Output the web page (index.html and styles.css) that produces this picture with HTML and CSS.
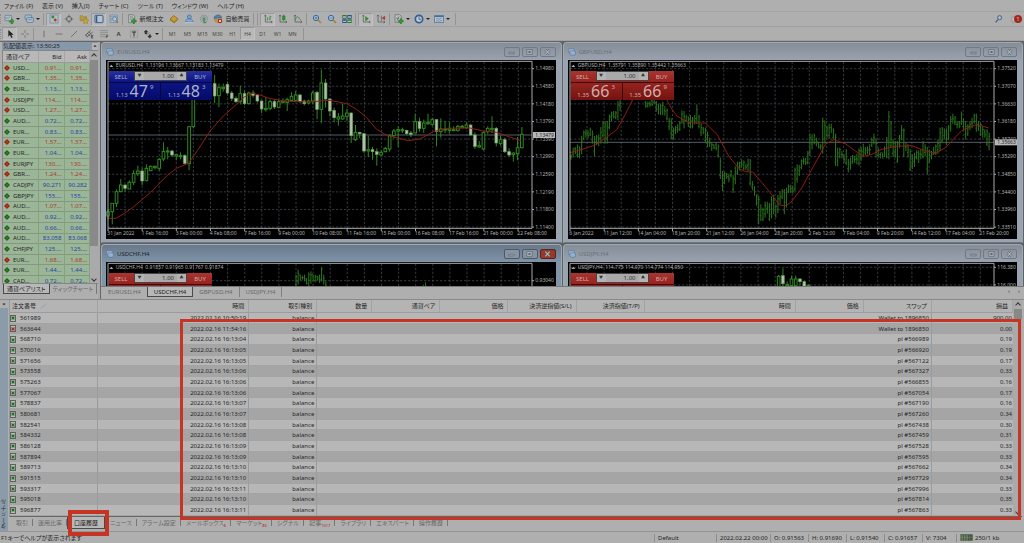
FILE: index.html
```html
<!DOCTYPE html>
<html lang="ja">
<head>
<meta charset="utf-8">
<title>ターミナル</title>
<link rel="stylesheet" href="styles.css">
</head>
<body>
<svg class="defs" aria-hidden="true">
  <symbol id="i-new" viewBox="0 0 30 30"><rect x="3" y="4" width="20" height="16" rx="2" fill="#b9c3c9" stroke="#4f7390" stroke-width="2"/><path d="M7 15v-6M12 16V8M17 13V8" stroke="#5d7f97" stroke-width="2"/><path d="M16 20h5v-5h5v5h4v5h-4v5h-5v-5h-5z" fill="#2f9a2b" stroke="#1e6b1c"/></symbol>
  <symbol id="i-profiles" viewBox="0 0 30 30"><rect x="3" y="3" width="20" height="14" rx="3" fill="#a9b8c6" stroke="#4b7398" stroke-width="2"/><rect x="8" y="11" width="20" height="14" rx="3" fill="#b4c0cb" stroke="#3e6a94" stroke-width="2"/><path d="M12 17h12" stroke="#5380a8" stroke-width="2"/></symbol>
  <symbol id="i-market" viewBox="0 0 30 30"><rect x="3" y="3" width="24" height="24" fill="#b4bcc4" stroke="#6388aa" stroke-width="2"/><path d="M6 9l6-5 5 5-5 5z" fill="#2f8c2d"/><path d="M13 18l6-5 5 5-5 5z" fill="#b33a22"/></symbol>
  <symbol id="i-target" viewBox="0 0 30 30" fill="none" stroke="#4d5358" stroke-width="2"><circle cx="15" cy="15" r="8"/><path d="M15 2v10M15 18v10M2 15h10M18 15h10"/></symbol>
  <symbol id="i-star" viewBox="0 0 30 30"><path d="M3 5h8l3 3h9v12H3z" fill="#b59a45" stroke="#7b6629"/><path d="M20 11l3 6 7 1-5 4 1 7-6-3-6 3 1-7-5-4 7-1z" fill="#c9a92f" stroke="#806514"/></symbol>
  <symbol id="i-terminal" viewBox="0 0 30 30"><rect x="3" y="4" width="24" height="22" rx="2" fill="#bac3cd" stroke="#315f91" stroke-width="3"/><path d="M8 5v20" stroke="#315f91" stroke-width="4"/></symbol>
  <symbol id="i-tester" viewBox="0 0 30 30"><rect x="3" y="3" width="22" height="22" fill="#afb9c3" stroke="#6a88a3" stroke-width="2"/><path d="M3 8h22M7 12v9M11 12v5" stroke="#6a88a3" stroke-width="2"/><circle cx="17" cy="15" r="6" fill="#b4c9dc" stroke="#446f97" stroke-width="2"/><path d="M21 20l6 7" stroke="#a37b2a" stroke-width="4"/></symbol>
  <symbol id="i-order" viewBox="0 0 30 30"><path d="M5 2h13l5 5v19H5z" fill="#bcc0c0" stroke="#62686c" stroke-width="2"/><path d="M9 8h8M9 12h10M9 16h7" stroke="#737b80" stroke-width="2"/><path d="M13 19h5v-5h5v5h5v5h-5v5h-5v-5h-5z" fill="#2f9a2b" stroke="#1e6b1c"/></symbol>
  <symbol id="i-book" viewBox="0 0 30 30"><path d="M3 15L14 5l13 9-11 11z" fill="#c89b28" stroke="#7f5e14" stroke-width="2"/><path d="M3 15v4l13 9 11-11v-3L16 25z" fill="#a0711d"/></symbol>
  <symbol id="i-user" viewBox="0 0 30 30"><circle cx="16" cy="9" r="6" fill="#7ba0c4" stroke="#386c9f" stroke-width="2"/><path d="M5 24c0-7 4-9 10-9s12 2 12 9z" fill="#8faecb" stroke="#386c9f" stroke-width="2"/><path d="M3 26h24" stroke="#b7c8d7" stroke-width="3"/></symbol>
  <symbol id="i-signal" viewBox="0 0 30 30" fill="none"><circle cx="15" cy="14" r="11" stroke="#75909d" stroke-width="2"/><circle cx="15" cy="14" r="6" stroke="#668c84" stroke-width="2"/><circle cx="15" cy="14" r="3" fill="#318c3a"/><path d="M15 15v12l7-2" stroke="#318c3a" stroke-width="3"/></symbol>
  <symbol id="i-auto" viewBox="0 0 30 30"><path d="M3 13c2-13 21-13 23-2z" fill="#5284ad" stroke="#315b7e" stroke-width="2"/><path d="M4 14l11 3 11-4-3 10-9 3-8-4z" fill="#c39d34" stroke="#805f18"/><circle cx="21" cy="21" r="7" fill="#b9291d"/><rect x="18" y="18" width="6" height="6" fill="#d5c8c5"/></symbol>
  <symbol id="i-bars" viewBox="0 0 30 30" fill="none" stroke="#4c5052" stroke-width="2"><path d="M7 4v20h20M4 7l3-4 3 4M24 21l4 3-4 3"/><path d="M14 19V9M11 17h3M21 19V5M18 15h3M21 8h4" stroke="#277d27"/></symbol>
  <symbol id="i-candles" viewBox="0 0 30 30" fill="none" stroke="#4c5052" stroke-width="2"><path d="M6 4v20h20M3 7l3-4 3 4M23 21l4 3-4 3"/><path d="M17 2v19" stroke="#277d27"/><rect x="14" y="6" width="7" height="11" fill="#2d9a2b" stroke="#277d27"/></symbol>
  <symbol id="i-line" viewBox="0 0 30 30" fill="none" stroke="#4c5052" stroke-width="2"><path d="M6 4v20h20M3 7l3-4 3 4M23 21l4 3-4 3"/><path d="M7 18c3-12 9-12 12-4l5 4" stroke="#277d27"/></symbol>
  <symbol id="i-zoomin" viewBox="0 0 30 30"><path d="M18 18l9 9" stroke="#a98129" stroke-width="5"/><circle cx="12" cy="12" r="8" fill="#aabfd2" stroke="#386b9c" stroke-width="3"/><path d="M8 12h8M12 8v8" stroke="#285c91" stroke-width="2"/></symbol>
  <symbol id="i-zoomout" viewBox="0 0 30 30"><path d="M18 18l9 9" stroke="#a98129" stroke-width="5"/><circle cx="12" cy="12" r="8" fill="#aabfd2" stroke="#386b9c" stroke-width="3"/><path d="M8 12h8" stroke="#285c91" stroke-width="2"/></symbol>
  <symbol id="i-tiles" viewBox="0 0 30 30"><path d="M1 3h13v11H1zM16 16h13v11H16z" fill="#2b7a2f"/><path d="M16 3h13v11H16zM1 16h13v11H1z" fill="#274e8c"/><path d="M3 9h9M18 9h9M3 22h9M18 22h9" stroke="#b5bfc3" stroke-width="4"/></symbol>
  <symbol id="i-scroll" viewBox="0 0 30 30" fill="none" stroke="#4c5052" stroke-width="2"><path d="M7 4v20h20M4 7l3-4 3 4M24 21l4 3-4 3"/><path d="M14 8l8 6-8 6z" fill="#2d9a2b" stroke="#277d27"/></symbol>
  <symbol id="i-shift" viewBox="0 0 30 30" fill="none" stroke="#4c5052" stroke-width="2"><path d="M6 4v20h20M3 7l3-4 3 4M23 21l4 3-4 3M16 5v16"/><path d="M26 7l-7 5 7 5z" fill="#a73524" stroke="#a73524"/></symbol>
  <symbol id="i-indicator" viewBox="0 0 30 30"><path d="M3 2h14l5 5v18H3z" fill="#b9bdbd" stroke="#62686c" stroke-width="2"/><path d="M8 20c5 0 3-12 8-12M7 13h7" fill="none" stroke="#4c5560" stroke-width="2"/><path d="M13 19h5v-5h5v5h5v5h-5v5h-5v-5h-5z" fill="#2f9a2b" stroke="#1e6b1c"/></symbol>
  <symbol id="i-clock" viewBox="0 0 30 30"><circle cx="15" cy="15" r="11" fill="#bcc8d2" stroke="#2b5f9e" stroke-width="5"/><path d="M15 8v8h6" fill="none" stroke="#39424a" stroke-width="2"/></symbol>
  <symbol id="i-template" viewBox="0 0 30 30"><rect x="2" y="4" width="26" height="22" fill="#b5c0ca" stroke="#3f6f9f" stroke-width="2"/><path d="M2 7h26" stroke="#3f6f9f" stroke-width="4"/><path d="M6 16l5-3 4 3 8-4M6 22l5-2 5 2 8-3" fill="none" stroke="#577b9b" stroke-width="2"/></symbol>
  <symbol id="i-cursor" viewBox="0 0 30 30"><path d="M10 3v20l5-5 4 9 4-2-4-8h7z" fill="#222"/></symbol>
  <symbol id="i-cross" viewBox="0 0 30 30"><path d="M15 3v9M15 18v9M3 15h9M18 15h9" stroke="#666" stroke-width="2"/></symbol>
  <symbol id="i-v" viewBox="0 0 30 30"><path d="M15 5v20" stroke="#555" stroke-width="2"/></symbol>
  <symbol id="i-h" viewBox="0 0 30 30"><path d="M5 15h20" stroke="#555" stroke-width="2"/></symbol>
  <symbol id="i-trend" viewBox="0 0 30 30"><path d="M6 24L24 6" stroke="#555" stroke-width="2"/></symbol>
  <symbol id="i-channel" viewBox="0 0 30 30"><path d="M3 20L20 4M8 25L26 9M9 12l8 9M14 8l8 8M5 17l6 7" stroke="#444" stroke-width="2"/><path d="M28 19h-6v8h6M22 23h5" fill="none" stroke="#333" stroke-width="2"/></symbol>
  <symbol id="i-fib" viewBox="0 0 30 30"><path d="M3 5h24M3 11h24M3 17h24M3 23h16" stroke="#666" stroke-width="2" stroke-dasharray="2 1"/><path d="M22 27v-7h6M22 23h5" fill="none" stroke="#444" stroke-width="2"/></symbol>
  <symbol id="i-text" viewBox="0 0 30 30"><rect x="4" y="4" width="22" height="22" fill="none" stroke="#777" stroke-width="2" stroke-dasharray="2 2"/><path d="M9 9h12M15 9v13" stroke="#333" stroke-width="3"/></symbol>
  <symbol id="i-arrows" viewBox="0 0 30 30"><path d="M3 9l6-6 6 6-4 1 1 5H6V10zM26 22l-6 6-6-6 4-1v-4h5v4zM11 17l9-7" fill="#333" stroke="#333"/></symbol>
  <symbol id="i-search" viewBox="0 0 30 30"><path d="M12 17l-7 8" stroke="#3f5f86" stroke-width="4"/><circle cx="17" cy="11" r="6" fill="#b5bec8" stroke="#3f5f86" stroke-width="3"/></symbol>
  <symbol id="i-chat" viewBox="0 0 30 30"><path d="M2 9h20v13H12l-6 6v-6H2z" fill="#c0c0c0" stroke="#8d8d8d" stroke-width="2"/></symbol>
  <symbol id="i-win" viewBox="0 0 24 24"><rect x="2" y="2" width="17" height="12" rx="2" fill="#9fb3cb" stroke="#5179a8" stroke-width="2"/><rect x="6" y="9" width="16" height="12" rx="2" fill="#aebfd1" stroke="#456fa2" stroke-width="2"/><path d="M10 17v-4M14 18v-4M18 17v-4" stroke="#456fa2"/></symbol>
  <symbol id="i-min" viewBox="0 0 24 15"><path d="M7 8h10v3H7z" fill="#aab1b8" stroke="#4e565e"/></symbol>
  <symbol id="i-max" viewBox="0 0 24 15"><path d="M7 3h10v9H7z" fill="#aab1b8" stroke="#4e565e"/><path d="M10 6h4v3h-4z" fill="#4e565e"/></symbol>
  <symbol id="i-close" viewBox="0 0 24 15"><path d="M8 3l8 9M16 3l-8 9" stroke="#4e565e" stroke-width="4"/><path d="M8 3l8 9M16 3l-8 9" stroke="#b5bac0" stroke-width="2"/></symbol>
</svg>

<div class="app">
  <nav class="menu" aria-label="メニュー">
    <button>ファイル (F)</button><button>表示 (V)</button><button>挿入(I)</button><button>チャート (C)</button><button>ツール (T)</button><button>ウィンドウ (W)</button><button>ヘルプ (H)</button>
  </nav>
  <div class="toolbar" role="toolbar" aria-label="標準">
    <span class="grip"></span>
    <button class="tb drop" aria-label="新規チャート"><svg><use href="#i-new"/></svg></button>
    <button class="tb drop" aria-label="組表示"><svg><use href="#i-profiles"/></svg></button>
    <span class="sep"></span>
    <button class="tb on" aria-label="気配値表示"><svg><use href="#i-market"/></svg></button>
    <button class="tb" aria-label="データウィンドウ"><svg><use href="#i-target"/></svg></button>
    <button class="tb" aria-label="ナビゲーター"><svg><use href="#i-star"/></svg></button>
    <button class="tb on" aria-label="ターミナル"><svg><use href="#i-terminal"/></svg></button>
    <button class="tb" aria-label="テスター"><svg><use href="#i-tester"/></svg></button>
    <span class="sep"></span>
    <button class="tb wide"><svg><use href="#i-order"/></svg>新規注文</button>
    <button class="tb" aria-label="エディター"><svg><use href="#i-book"/></svg></button>
    <button class="tb" aria-label="コミュニティ"><svg><use href="#i-user"/></svg></button>
    <button class="tb" aria-label="シグナル"><svg><use href="#i-signal"/></svg></button>
    <button class="tb wide"><svg><use href="#i-auto"/></svg>自動売買</button>
    <span class="sep"></span><span class="sep"></span>
    <button class="tb on" aria-label="バーチャート"><svg><use href="#i-bars"/></svg></button>
    <button class="tb" aria-label="ローソク足"><svg><use href="#i-candles"/></svg></button>
    <button class="tb" aria-label="ライン"><svg><use href="#i-line"/></svg></button>
    <span class="sep"></span>
    <button class="tb" aria-label="拡大"><svg><use href="#i-zoomin"/></svg></button>
    <button class="tb" aria-label="縮小"><svg><use href="#i-zoomout"/></svg></button>
    <button class="tb" aria-label="整列"><svg><use href="#i-tiles"/></svg></button>
    <span class="sep"></span>
    <button class="tb on" aria-label="自動スクロール"><svg><use href="#i-scroll"/></svg></button>
    <button class="tb" aria-label="シフト"><svg><use href="#i-shift"/></svg></button>
    <span class="sep"></span>
    <button class="tb drop" aria-label="インディケータ"><svg><use href="#i-indicator"/></svg></button>
    <button class="tb drop" aria-label="時間足"><svg><use href="#i-clock"/></svg></button>
    <button class="tb drop" aria-label="定型チャート"><svg><use href="#i-template"/></svg></button>
    <span class="sep end"></span>
    <span class="spacer"></span>
    <button class="tb" aria-label="検索"><svg><use href="#i-search"/></svg></button>
    <button class="tb notify" aria-label="通知"><svg><use href="#i-chat"/></svg><span class="badge">1</span></button>
  </div>
  <div class="toolbar second" role="toolbar" aria-label="描画">
    <span class="grip"></span>
    <button class="tb on" aria-label="カーソル"><svg><use href="#i-cursor"/></svg></button>
    <button class="tb" aria-label="十字"><svg><use href="#i-cross"/></svg></button>
    <span class="sep"></span>
    <button class="tb" aria-label="垂直線"><svg><use href="#i-v"/></svg></button>
    <button class="tb" aria-label="水平線"><svg><use href="#i-h"/></svg></button>
    <button class="tb" aria-label="トレンドライン"><svg><use href="#i-trend"/></svg></button>
    <button class="tb" aria-label="チャネル"><svg><use href="#i-channel"/></svg></button>
    <button class="tb" aria-label="フィボナッチ"><svg><use href="#i-fib"/></svg></button>
    <button class="tb letter">A</button>
    <button class="tb" aria-label="ラベル"><svg><use href="#i-text"/></svg></button>
    <button class="tb drop" aria-label="矢印"><svg><use href="#i-arrows"/></svg></button>
    <span class="sep"></span>
    <button class="tb tf">M1</button><button class="tb tf">M5</button><button class="tb tf">M15</button><button class="tb tf">M30</button><button class="tb tf">H1</button><button class="tb tf on">H4</button><button class="tb tf">D1</button><button class="tb tf">W1</button><button class="tb tf">MN</button>
    <span class="sep end"></span>
  </div>

  <div class="workspace">
    <aside class="market">
      <header class="market-title"><span>気配値表示: 13:50:25</span><button aria-label="閉じる">×</button></header>
      <div class="market-body">
        <div class="market-scroll">
          <table class="quotes">
            <thead><tr><th class="sym">通貨ペア</th><th>Bid</th><th>Ask</th></tr></thead>
            <tbody id="quotes"></tbody>
          </table>
        </div>
        <div class="vscroll"><span class="arrow up"></span><span class="thumb"></span><span class="arrow down"></span></div>
      </div>
      <div class="market-tabs"><button class="tab active">通貨ペアリスト</button><button class="tab">ティックチャート</button></div>
    </aside>
    <main class="desk">
      <div class="windows" id="windows"></div>
      <div class="chart-tabs"><button class="tab">EURUSD,H4</button><button class="tab active">USDCHF,H4</button><button class="tab">GBPUSD,H4</button><button class="tab">USDJPY,H4</button><span class="spacer"></span><button class="nudge">‹</button><button class="nudge">›</button></div>
    </main>
  </div>

  <section class="terminal">
    <div class="side"><button aria-label="閉じる">×</button><span>ターミナル</span></div>
    <div class="terminal-main">
      <div class="history-wrap">
        <table class="history">
          <colgroup><col class="c-id"><col class="c-time"><col class="c-std"><col class="c-vol"><col class="c-std"><col class="c-std"><col class="c-std"><col class="c-std"><col class="c-time"><col class="c-std"><col class="c-std"><col class="c-pl"></colgroup>
          <thead><tr><th class="id">注文番号 <i>∕</i></th><th>時間</th><th>取引種別</th><th>数量</th><th>通貨ペア</th><th>価格</th><th>決済逆指値(S/L)</th><th>決済指値(T/P)</th><th>時間</th><th>価格</th><th>スワップ</th><th>損益</th></tr></thead>
          <tbody id="history"></tbody>
        </table>
        <div class="vscroll history-scroll"><span class="arrow up"></span><span class="thumb"></span><span class="arrow down"></span></div>
      </div>
      <div class="terminal-tabs"><button class="tab">取引</button><button class="tab">運用比率</button><button class="tab active">口座履歴</button><button class="tab">ニュース</button><button class="tab">アラーム設定</button><button class="tab">メールボックス<sub>6</sub></button><button class="tab">マーケット<sub>83</sub></button><button class="tab">シグナル</button><button class="tab">記事<sub>1017</sub></button><button class="tab">ライブラリ</button><button class="tab">エキスパート</button><button class="tab">操作履歴</button></div>
    </div>
    <div class="mark mark-rows"></div>
    <div class="mark mark-tab"></div>
  </section>

  <footer class="status">
    <span class="help">F1キーでヘルプが表示されます</span>
    <span class="s-profile">Default</span><span class="s-date">2022.02.22 00:00</span><span class="s-val">O: 0.91563</span><span class="s-val">H: 0.91690</span><span class="s-val">L: 0.91540</span><span class="s-val">C: 0.91657</span><span class="s-vol">V: 7304</span>
    <span class="s-net"><svg viewBox="0 0 39 21"><path d="M1 1h37v19H1z" fill="#3a4a35"/><path d="M3 3v16M8 3v16M13 3v16M18 3v16M23 3v16" stroke="#8fa682" stroke-width="2"/><path d="M1 10h37M28 3v16M33 3v16" stroke="#9aa3a8"/></svg>250/1 kb</span>
  </footer>
</div>
<script src="app.js"></script>
</body>
</html>
```

FILE: styles.css
```css
* { box-sizing: border-box; }
body {
  margin: 0;
  background: #afafaf;
  color: #262626;
  font: 6px/8px "Noto Sans", "Noto Sans CJK JP", sans-serif;
  font-feature-settings: "palt";
}
button, input { font: inherit; color: inherit; margin: 0; padding: 0; border: 0; background: none; font-feature-settings: inherit; }
button { white-space: nowrap; }
.defs { display: none; }
.app { display: flex; flex-direction: column; height: 100vh; overflow: hidden; }
.spacer { flex: 1; }

.menu { display: flex; flex: none; gap: 9px; height: 12px; padding: 0 4px; align-items: center; border-bottom: 1px solid #a2a2a2; }

.toolbar { display: flex; flex: none; height: 15px; align-items: center; border-bottom: 1px solid #a0a0a0; }
.toolbar.second { height: 14px; }
.grip { width: 2px; height: 10px; border-left: 1px dotted #8d8d8d; }
.tb { position: relative; flex: none; display: flex; align-items: center; justify-content: center; width: 15px; height: 13px; }
.tb svg { width: 10px; height: 10px; flex: none; }
.tb.on { background: #b9b9b9; border: 1px solid #989898; border-right-color: #c2c2c2; border-bottom-color: #c2c2c2; }
.tb.drop { width: 20px; gap: 2px; }
.tb.drop::after { content: ""; border: 2px solid transparent; border-top-color: #222; border-bottom: 0; }
.tb.wide { width: 41px; gap: 2px; }
.tb.letter { font-weight: bold; color: #444; }
.tb.tf { font-size: 5px; color: #444; }
.sep { flex: none; width: 4px; height: 12px; border-left: 1px solid #939393; margin-left: 1px; margin-right: -1px; }
.sep.end { margin-left: 3px; }
.notify { margin-left: 2px; margin-right: 1px; }
.badge { position: absolute; right: 1px; top: 2px; width: 8px; height: 8px; border-radius: 4px; background: #a3271d; color: #ccc; font-size: 6px; line-height: 8px; }

.workspace { display: flex; flex: 1; min-height: 0; background: #a9a9a9; border-top: 1px solid #666; }
.market { display: flex; flex-direction: column; width: 98px; padding-left: 2px; flex: none; min-height: 0; background: #afafaf; }
.market-title { display: flex; flex: none; justify-content: space-between; align-items: center; height: 8px; padding: 0 0 0 1px; background: #8798aa; }
.market-title button { width: 6px; height: 7px; line-height: 6px; background: #b4b4b4; font-weight: bold; }
.market-body { display: flex; flex: 1; min-height: 0; border: 1px solid #858585; border-right: 0; }
.market-scroll { flex: 1; min-width: 0; overflow: hidden; }
table { border-collapse: separate; border-spacing: 0; table-layout: fixed; width: 100%; }
th { font-weight: normal; }
th, td { padding: 0; white-space: nowrap; overflow: hidden; line-height: 8px; }
.quotes { height: 236px; }
.quotes thead tr { height: 12px; }
.quotes th { background: #b8b8b8; text-align: right; padding-right: 2px; border-right: 1px solid #a6a6a6; border-bottom: 1px solid #9a9a9a; }
.quotes th.sym { width: 36px; text-align: left; padding-left: 3px; }
.quotes td { background: #9bb597; text-align: right; padding-right: 2px; border-right: 1px solid #87a083; border-bottom: 1px solid #83987f; }
.quotes td:first-child { text-align: left; padding: 0 0 0 2px; }
.quotes .down { color: #a73d2b; }
.quotes .up { color: #2746a5; }
.dot { display: inline-block; width: 4px; height: 4px; margin-right: 4px; background: #2b8129; border: 1px solid #245f22; rotate: 45deg; }
.dot.fall { background: #c0341e; border-color: #8d2819; }
.vscroll { display: flex; flex-direction: column; align-items: center; flex: none; width: 8px; background: #aaa; }
.vscroll .arrow { flex: none; width: 4px; height: 4px; margin: 3px 0 2px; border: solid #333; border-width: 1px 0 0 1px; rotate: 45deg; }
.vscroll .arrow.down { border-width: 0 1px 1px 0; margin-top: auto; }
.vscroll .thumb { width: 8px; height: 186px; background: #898989; }
.tab { color: #686868; }
.tab.active { color: #1b1b1b; background: #b8b8b8; border: 1px solid #4a4a4a; border-top: 0; }
.market-tabs { display: flex; flex: none; height: 15px; align-items: flex-start; padding-left: 1px; }
.market-tabs .tab { height: 10px; padding: 0 3px; }
.market-tabs .tab:last-child { border-right: 1px solid #777; }

.desk { display: flex; flex-direction: column; flex: 1; min-width: 0; margin-left: 2px; border-left: 1px solid #666; }
.windows { display: grid; grid-template-columns: 1fr 1fr; grid-auto-rows: 201px; gap: 1px; flex: 1; min-height: 0; padding: 0 1px 0 0; overflow: hidden; background: #5f6265; }
.win { display: flex; flex-direction: column; min-width: 0; padding: 0 5px 3px 4px; border-radius: 4px 4px 0 0; background: linear-gradient(#858d97, #9aa4b0 18px); border: 1px solid #a0a8b1; border-bottom-color: #70767d; color: #687079; }
.win.current { background: linear-gradient(#68798b, #8195a9 18px); color: #1e252c; }
.win-title { display: flex; flex: none; align-items: center; height: 17px; gap: 3px; }
.win-title svg.mark-icon { width: 8px; height: 8px; }
.win-title h2 { flex: 1; margin: 0; font: inherit; }
.ctl { display: flex; align-items: center; justify-content: center; width: 16px; height: 10px; margin-left: -1px; border: 1px solid #717a84; border-radius: 2px; }
.ctl svg { width: 13px; height: 8px; }
.current .ctl { background: #8793a0; border-color: #4d5965; }
.current .ctl.x { background: #9a3828; border-color: #5a241d; }
.chart { position: relative; flex: 1; min-height: 0; overflow: hidden; background: #000; }
.chart > svg { display: block; width: 100%; height: 100%; }
.chart text { fill: #b0b0b0; font-size: 15px; }
.grid { stroke: #4a535c; stroke-width: 2; stroke-dasharray: 7 5; }
.frame { fill: none; stroke: #a9a9a9; stroke-width: 3; }
.bid { stroke: #535c64; stroke-width: 3; }
.ma { fill: none; stroke: #8e1d14; stroke-width: 3; }
.wick { stroke: #2f8a1e; stroke-width: 3; fill: none; }
.bull { fill: #000; stroke: #2f8a1e; stroke-width: 3; }
.bear { fill: #b3bfad; stroke: #6fa061; stroke-width: 2; }
.bar { stroke: #2b751c; stroke-width: 3; fill: none; }
.chart .tag { fill: #b8b8b8; }
.chart .tag-text { fill: #222; }

.trade { position: absolute; left: 3px; top: 11px; display: grid; grid-template-columns: 51px 51px; gap: 1px; --c1: #2831a0; --c2: #0c1482; --c3: #050b69; background: #05083e; color: #aeb4ca; }
.trade.red { --c1: #a93430; --c2: #96231f; --c3: #731310; background: #3d0806; color: #ceb0ac; }
.trade-top { grid-column: 1 / 3; display: grid; grid-template-columns: 24px 1fr 24px; gap: 1px; height: 11px; background: linear-gradient(var(--c1), var(--c2)); }
.lots { display: flex; margin-bottom: 1px; background: #b3b3b3; color: #333; border: 1px solid #444; }
.lots button { width: 9px; font-size: 4px; line-height: 6px; }
.lots input { flex: 1; width: 0; min-width: 0; height: 8px; padding-right: 3px; text-align: right; background: #a9a9a9; }
.quote { display: flex; height: 17px; align-items: flex-end; justify-content: center; gap: 2px; padding-bottom: 2px; background: linear-gradient(var(--c2), var(--c3)); }
.quote .pre { line-height: 6px; }
.quote .big { font-size: 16px; line-height: 13px; }
.quote .pip { align-self: flex-start; }

.chart-tabs { display: flex; flex: none; height: 13px; align-items: flex-start; padding-left: 1px; background: #afafaf; border-top: 1px solid #787878; }
.chart-tabs .tab { height: 10px; padding: 0 6px; }
.chart-tabs .tab:nth-child(n+3) { border-right: 1px solid #808080; }
.nudge { width: 10px; }

.terminal { position: relative; display: flex; flex: none; padding-right: 2px; border-top: 1px solid #8a8a8a; }
.side { display: flex; flex-direction: column; justify-content: space-between; align-items: center; width: 8px; margin-right: 1px; background: #8c9baa; }
.side span { writing-mode: vertical-rl; rotate: 180deg; color: #2b3239; padding-top: 2px; }
.side button { width: 8px; height: 8px; font-weight: bold; background: #afafaf; }
.terminal-main { flex: 1; min-width: 0; }
.history-wrap { display: flex; border-bottom: 1px solid #666; border-left: 1px solid #999; }
.history { flex: 1; width: 0; height: 216px; }
.c-id { width: 88px; } .c-time { width: 151px; } .c-std { width: 68px; } .c-vol { width: 55px; } .c-pl { width: 81px; }
.history thead tr { height: 13px; }
.history th { background: #b4b4b4; text-align: right; padding-right: 4px; border-right: 1px solid #a2a2a2; border-bottom: 1px solid #9c9c9c; }
.history th.id { text-align: left; padding-left: 2px; }
.history th i { margin-left: 3px; color: #666; }
.history td { text-align: right; padding-right: 2px; background: #b7b7b7; border-bottom: 1px solid #a4a4a4; }
.history td:nth-child(-n+4) { border-right: 1px solid #9b9b9b; }
.history tr:nth-child(even) td { background: #a5a5a5; }
.history td:first-child { text-align: left; padding-left: 0; }
.history td:last-child { padding-right: 1px; }
.doc { display: inline-flex; align-items: center; justify-content: center; width: 6px; height: 7px; margin-right: 4px; vertical-align: middle; border: 1px solid #5c635c; background: #b5bbb5; }
.doc::after { content: ""; width: 2px; height: 2px; background: #246b22; outline: 1px solid #7fa37c; }
.doc.out::after { background: #b02d1c; outline-color: #b07f77; }
.history-scroll { width: 9px; }
.history-scroll .thumb { height: 10px; background: #888; }
.terminal-tabs { display: flex; height: 14px; align-items: flex-start; padding-left: 2px; }
.terminal-tabs .tab { position: relative; padding: 1px 5px 0; height: 11px; }
.terminal-tabs .tab:not(.active)::after { content: ""; position: absolute; right: 0; top: 2px; height: 7px; border-right: 1px solid #777; }
.terminal-tabs .tab.active { height: 12px; padding: 1px 6px 0; }
sub { color: #a8271d; font-size: 4px; line-height: 0; }
.mark { position: absolute; border: 3px solid #c63524; pointer-events: none; }
.mark-rows { left: 180px; right: 3px; top: 19px; bottom: 11px; }
.mark-tab { left: 68px; bottom: -5px; width: 41px; height: 26px; border-width: 4px; }

.status { display: flex; flex: none; height: 12px; align-items: center; border-top: 1px solid #949494; padding-right: 1px; }
.status span { padding-left: 3px; border-left: 1px solid #8e8e8e; }
.status .help { flex: 1; border: 0; padding-left: 1px; }
.s-profile { width: 62px; }
.s-date { width: 54px; }
.s-val { width: 38px; }
.s-vol { width: 34px; }
.s-net { display: flex; align-items: center; gap: 2px; width: 67px; }
.s-net svg { width: 13px; height: 7px; }
```

FILE: app.js
```js
const quotes = [
  ['USD...', '0.91...', '0.91...', 0], ['GBR...', '1.35...', '1.35...', 0], ['EUR...', '1.13...', '1.13...', 1],
  ['USDJPY', '114....', '114....', 0], ['USD...', '1.27...', '1.27...', 0], ['AUD...', '0.72...', '0.72...', 1],
  ['EUR...', '0.83...', '0.83...', 1], ['EUR...', '1.57...', '1.57...', 0], ['EUR...', '1.04...', '1.04...', 1],
  ['EURJPY', '130....', '130....', 0], ['GBR...', '1.24...', '1.24...', 0], ['CADJPY', '90.271', '90.282', 1],
  ['GBPJPY', '155....', '155....', 1], ['AUD...', '1.07...', '1.07...', 0], ['AUD...', '0.92...', '0.92...', 1],
  ['AUD...', '0.66...', '0.66...', 1], ['AUD...', '83.058', '83.068', 1], ['CHFJPY', '125....', '125....', 1],
  ['EUR...', '1.68...', '1.68...', 0], ['EUR...', '1.44...', '1.44...', 1], ['CAD...', '0.72...', '0.72...', 1]
];
document.getElementById('quotes').innerHTML = quotes.map(([s, b, a, up]) => {
  const c = up ? 'up' : 'down';
  return `<tr><td><span class="dot ${up ? '' : 'fall'}"></span>${s}</td><td class="${c}">${b}</td><td class="${c}">${a}</td></tr>`;
}).join('');

const history = [
  ['561989', '10:50:19', 'Wallet to 1896850', '900.00'], ['563644', '11:54:16', 'Wallet to 1896850', '0.00'],
  ['568710', '16:13:04', 'pl #566989', '0.19'], ['570016', '16:13:05', 'pl #566920', '0.19'],
  ['571656', '16:13:05', 'pl #567122', '0.17'], ['573558', '16:13:06', 'pl #567327', '0.33'],
  ['575263', '16:13:06', 'pl #566855', '0.16'], ['577067', '16:13:06', 'pl #567054', '0.17'],
  ['578837', '16:13:07', 'pl #567190', '0.16'], ['580681', '16:13:07', 'pl #567260', '0.34'],
  ['582541', '16:13:08', 'pl #567438', '0.30'], ['584332', '16:13:08', 'pl #567459', '0.31'],
  ['586128', '16:13:09', 'pl #567528', '0.33'], ['587894', '16:13:09', 'pl #567595', '0.33'],
  ['589713', '16:13:10', 'pl #567662', '0.34'], ['591515', '16:13:10', 'pl #567729', '0.34'],
  ['593317', '16:13:11', 'pl #567996', '0.33'], ['595018', '16:13:10', 'pl #567814', '0.35'],
  ['596877', '16:13:11', 'pl #567863', '0.33']
];
document.getElementById('history').innerHTML = history.map(([id, t, note, pl], i) =>
  `<tr><td><span class="doc ${i === 1 ? 'out' : ''}"></span>${id}</td><td>2022.02.16 ${t}</td><td>balance</td><td colspan="8">${note}</td><td>${pl}</td></tr>`
).join('');

// Candles: high, body top, body bottom, low, filled (1) or hollow (0); null leaves a slot empty.
const eurusd = [
  [505,512,525,535,0],[487,487,512,550,0],[445,452,487,498,0],[414,432,452,452,0],[430,432,442,452,1],[418,424,444,444,0],
  [388,398,424,432,0],[374,390,398,405,0],[380,390,420,433,1],[370,382,419,421,0],[374,376,389,389,0],[374,376,380,385,0],
  [352,355,382,389,0],[304,331,354,360,0],[318,330,332,355,0],[326,330,342,348,1],[338,341,345,358,0],[334,344,347,355,0],
  [340,344,367,370,1],[255,257,368,388,0],[160,170,257,262,0],null,null,null,null,
  [102,128,165,186,1],[128,140,164,198,0],[128,139,143,152,0],[122,130,156,160,1],[150,156,172,180,1],[166,172,182,186,1],
  [134,158,182,190,0],[148,158,188,192,1],[152,156,188,190,0],[148,156,163,170,1],[160,162,180,185,1],[178,180,204,216,1],
  [168,202,206,212,0],[176,182,202,208,0],[176,182,198,204,1],[176,182,199,202,0],[172,180,184,188,0],[170,176,184,210,0],
  [154,166,178,182,0],[150,162,178,180,0],[158,162,182,186,1],[176,180,188,194,1],[176,180,186,190,0],[150,156,180,190,0],
  [150,154,205,235,1],[86,126,205,247,0],[114,126,174,200,1],[172,174,210,226,1],[200,208,230,244,1],[216,228,234,254,0],
  [188,225,234,236,0],[204,216,226,240,0],[214,216,284,306,1],[252,274,296,300,0],[272,274,278,292,1],[276,278,330,336,1],
  [284,326,330,348,0],[318,326,332,356,1],[322,332,340,374,1],[328,334,342,344,0],[318,322,332,334,0],[280,284,324,332,0],
  [264,270,284,292,0],[256,266,270,318,0],[260,266,268,276,0],[266,268,278,282,1],[270,276,280,288,1],[218,242,276,276,0],
  [230,242,262,272,1],[236,246,262,276,0],[218,244,248,252,0],[230,236,250,256,0],[234,236,272,316,1],[232,264,272,290,0],
  [240,264,266,276,0],[244,264,268,278,0],[256,266,268,270,0],[252,256,268,272,0],[252,256,259,262,0],[244,252,260,264,0],
  [250,252,282,284,1],[274,282,316,324,1],[300,314,318,320,0],[272,274,324,328,0],[256,262,272,278,0],[226,262,266,276,0],
  [258,262,306,316,1],[284,296,308,314,0],[290,296,332,336,1],[322,332,342,348,1],[334,336,341,362,0],[288,320,338,358,0],[258,280,320,322,0]
];
// Bars: high and low per slot.
const gbpusd = '340 356,320 350,318 340,310 350,316 352,285 340,268 298,265 290,268 292,260 285,268 308,285 346,282 312,280 316,258 308,240 290,240 308,240 308,220 265,212 240,210 232,210 235,180 238,170 210,,,,,,,,,,,,180 200,182 200,180 198,175 195,170 190,180 212,188 220,188 222,182 222,195 224,202 238,230 268,232 294,260 296,255 280,250 275,240 270,208 248,210 262,222 244,226 258,222 262,228 262,222 250,190 248,222 262,248 285,258 280,260 305,272 318,290 318,305 330,310 324,305 328,310 350,350 414,390 450,392 430,396 414,398 424,386 410,402 456,376 430,362 402,362 388,355 380,358 388,368 388,353 390,354 434,420 448,435 464,460 494,465 550,490 540,500 540,482 530,482 518,486 540,466 532,462 520,490 530,462 516,450 490,444 474,444 520,440 500,430 456,432 456,434 458,380 450,370 425,372 405,355 385,350 370,350 372,330 370,278 345,280 325,278 310,290 316,302 322,310 326,230 338,238 308,255 290,248 294,248 276,262 296,278 375,320 376,320 352,330 352,340 366,324 372,354 394,350 386,342 368,344 366,338 370,322 374,318 360,308 348,318 342,316 340,310 342,290 318,278 310,292 350,320 350,334 352,336 350,316 348,288 352,210 355,240 320,295 348,300 350,300 366,282 320,252 298,262 348,305 330,310 350,325 390,340 384,335 378,328 355,328 366,325 355,300 352,310 346,318 400,326 366,330 355,318 342,310 342,296 338,260 330,258 305,262 295,262 312,252 298,225 272,218 248,225 252,240 262,240 262,212 252,232 268,240 296,250 285,240 268,230 262,218 248,218 272,240 270,245 285,255 290,265 290,265 315,275 328';

function candles(list, x0, step) {
  return list.map((c, i) => {
    if (!c) return '';
    const x = x0 + i * step;
    return `<path class="wick" d="M${x} ${c[0]}V${c[3]}"/><rect class="${c[4] ? 'bear' : 'bull'}" x="${x - 4}" y="${c[1]}" width="8" height="${Math.max(3, c[2] - c[1])}"/>`;
  }).join('');
}
function bars(text, x0, step) {
  return text.split(',').map((p, i) => {
    if (!p) return '';
    const [h, l] = p.split(' ').map(Number), x = x0 + i * step, d = i % 3 * 5;
    return `<path class="bar" d="M${x} ${h}V${l}M${x - 3} ${l - 6 - d}h3M${x} ${h + 6 + d}h3"/>`;
  }).join('');
}
function scene(w) {
  const full = !w.short;
  const bottom = full ? 562 : 700;
  let s = '';
  for (let x = 75; x < 1296; x += 51.3) s += `<path class="grid" d="M${x} 62V${bottom}"/>`;
  w.prices.forEach((p, i) => {
    const y = w.firstLine + i * 52.8;
    s += `<path class="grid" d="M24 ${y}H1296"/><path class="frame" d="M1296 ${y}h6"/><text x="1306" y="${y + 5}">${p}</text>`;
  });
  if (w.bid) s += `<path class="bid" d="M24 ${w.bid}H1296"/>`;
  s += w.drawing;
  if (w.ma) s += `<polyline class="ma" points="${w.ma}"/>`;
  s += `<path class="frame" d="M24 ${bottom}V61H1296V${bottom}${full ? 'z' : ''}"/>`;
  if (w.bid) s += `<rect class="tag" x="1299" y="${w.bid - 9}" width="66" height="18"/><text class="tag-text" x="1306" y="${w.bid + 5}">${w.last}</text>`;
  (w.dates || []).forEach((d, i) => { s += `<path class="frame" d="M${24 + i * 102.5} 562v8"/><text x="${22 + i * 102.5}" y="583">${d}</text>`; });
  s += `<path d="M28 78l6-7 6 7z" fill="#aaa"/><text x="47" y="78">${w.info}</text>`;
  return `<svg viewBox="18 57 1353 537" preserveAspectRatio="xMinYMin slice">${s}</svg>`;
}
const windows = [
  { name: 'EURUSD,H4', info: 'EURUSD,H4&#160; 1.13196 1.13667 1.13183 1.13479', last: '1.13479', bid: 282, firstLine: 83,
    prices: ['1.14980','1.14580','1.14180','1.13790','1.13390','1.12990','1.12590','1.12190','1.11800','1.11400'],
    dates: ['31 Jan 2022','1 Feb 16:00','3 Feb 00:00','4 Feb 08:00','7 Feb 16:00','9 Feb 00:00','10 Feb 08:00','11 Feb 16:00','15 Feb 00:00','16 Feb 08:00','17 Feb 16:00','21 Feb 00:00','22 Feb 08:00'],
    drawing: candles(eurusd, 24, 12.8),
    ma: '24,532 48,532 75,516 100,498 152,454 203,402 229,382 265,367 293,328 330,270 370,225 410,190 433,168 455,157 480,162 510,173 562,181 630,183 660,180 690,178 740,188 770,205 800,230 830,265 860,283 890,290 925,299 960,294 1000,272 1040,262 1110,261 1150,270 1190,274 1220,285 1262,299',
    color: '', sell: ['1.13', '47', '9'], buy: ['1.13', '48', '3'] },
  { name: 'GBPUSD,H4', info: 'GBPUSD,H4&#160; 1.35791 1.35890 1.35442 1.35663', last: '1.35663', bid: 304, firstLine: 83,
    prices: ['1.37520','1.37070','1.36630','1.36180','1.35740','1.35290','1.34850','1.34400','1.33960','1.33510'],
    dates: ['6 Jan 2022','11 Jan 12:00','14 Jan 04:00','18 Jan 20:00','21 Jan 12:00','26 Jan 04:00','28 Jan 20:00','2 Feb 12:00','7 Feb 04:00','9 Feb 20:00','14 Feb 12:00','17 Feb 04:00','21 Feb 20:00'],
    drawing: bars(gbpusd, 27, 6.4),
    ma: '24,335 60,325 100,312 130,292 165,265 190,220 210,180 240,100 290,100 316,180 330,205 345,225 370,240 400,246 430,246 465,280 500,345 530,382 550,392 572,393 600,425 630,462 652,492 672,494 690,480 720,440 741,400 770,348 790,310 815,296 850,308 880,330 905,346 930,340 960,325 1000,316 1050,314 1080,326 1120,338 1150,320 1200,268 1245,250 1280,261',
    color: 'red', sell: ['1.35', '66', '3'], buy: ['1.35', '66', '9'] },
  { name: 'USDCHF,H4', current: true, short: true, info: 'USDCHF,H4&#160; 0.91857 0.91965 0.91767 0.91874', firstLine: 113, prices: ['0.93040'],
    drawing: bars('95 130,80 125,95 112,98 110,95 115,105 125,88 135,85 122,95 110,95 118,98 112,95 120,72 115,95 125,112 140', 588, 6.4) + bars('125 150,118 150', 970, 6.4),
    color: 'red', sell: ['0.91', '87', '4'], buy: ['0.91', '88', '1'] },
  { name: 'USDJPY,H4', short: true, info: 'USDJPY,H4&#160; 114.775 114.970 114.774 114.950', firstLine: 73, prices: ['116.380', '116.000'],
    drawing: candles([[96,100,140,150,0],[76,98,122,150,1],[115,124,128,140,0],[98,108,128,140,0],[98,108,128,140,0],[105,108,116,128,1],[112,116,150,150,1],[124,127,130,150,0]], 650, 12.8),
    color: 'red', sell: ['114', '95', '0'], buy: ['114', '95', '4'] }
];
const quote = q => `<button class="quote"><span class="pre">${q[0]}</span><span class="big">${q[1]}</span><span class="pip">${q[2]}</span></button>`;
document.getElementById('windows').innerHTML = windows.map(w => `
  <article class="win ${w.current ? 'current' : ''}">
    <header class="win-title"><svg class="mark-icon"><use href="#i-win"/></svg><h2>${w.name}</h2>
      <button class="ctl" aria-label="最小化"><svg><use href="#i-min"/></svg></button><button class="ctl" aria-label="最大化"><svg><use href="#i-max"/></svg></button><button class="ctl x" aria-label="閉じる"><svg><use href="#i-close"/></svg></button>
    </header>
    <div class="chart">${scene(w)}
      <div class="trade ${w.color}">
        <div class="trade-top"><button>SELL</button><div class="lots"><button aria-label="減らす">▼</button><input aria-label="${w.name} ロット" value="1.00"><button aria-label="増やす">▲</button></div><button>BUY</button></div>
        ${quote(w.sell)}${quote(w.buy)}
      </div>
    </div>
  </article>`).join('');
```
